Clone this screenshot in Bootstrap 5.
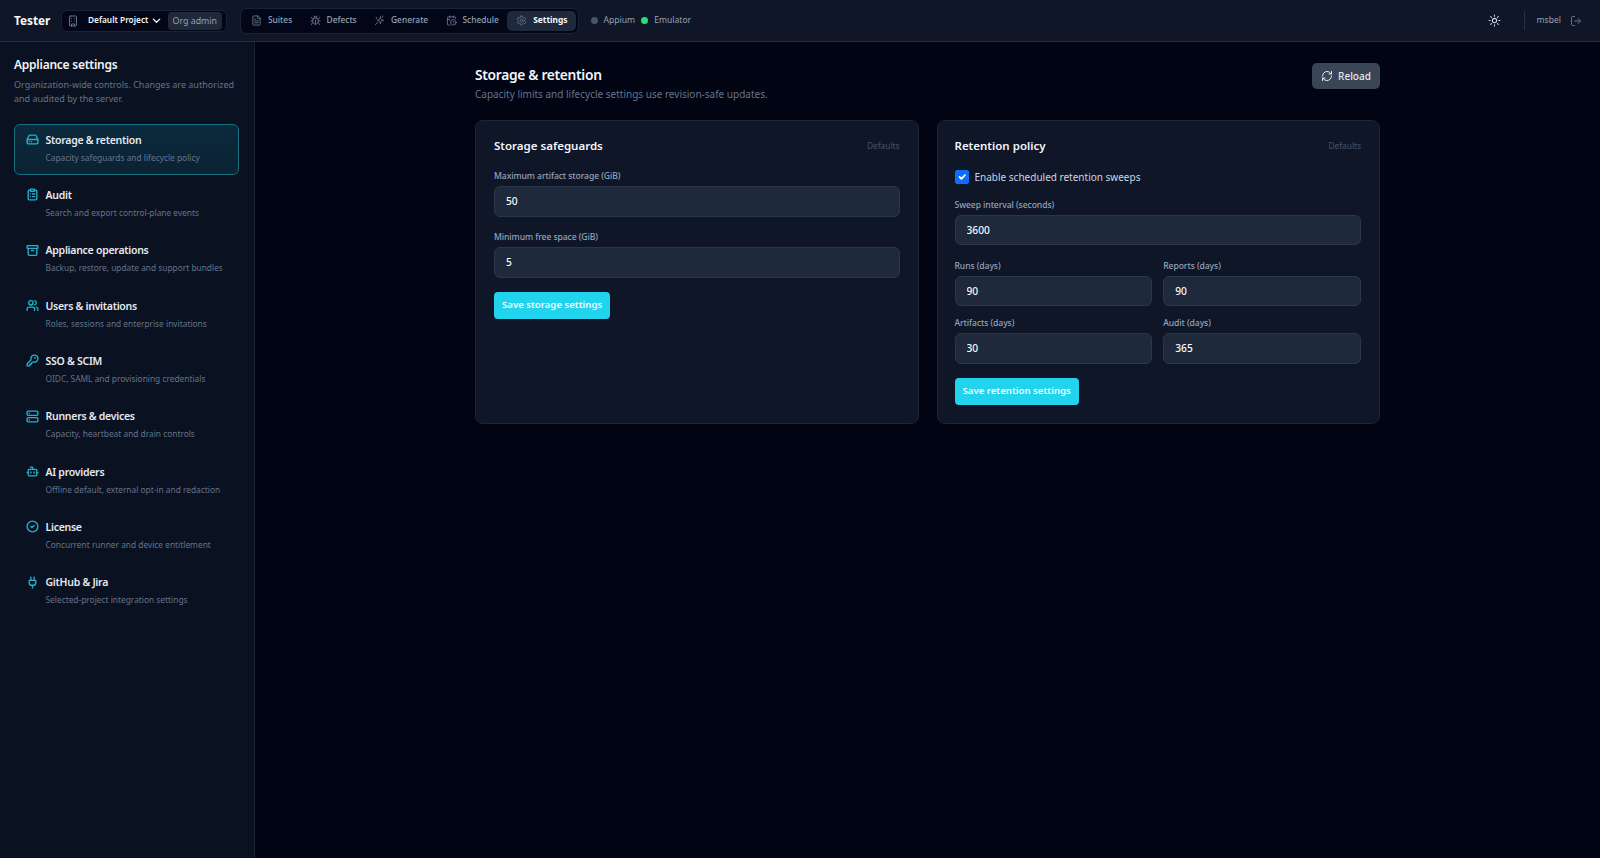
<!DOCTYPE html>
<html lang="en" data-bs-theme="dark">
<head>
<meta charset="utf-8">
<title>Tester</title>
<link href="https://cdn.jsdelivr.net/npm/bootstrap@5.3.0/dist/css/bootstrap.min.css" rel="stylesheet">
<style>
html,body{height:100%}
body{background:#010413;color:#e2e8f0;font-family:"Noto Sans","Liberation Sans",sans-serif;font-size:12px;overflow:hidden}
.ico{fill:none;stroke:currentColor;stroke-width:2;stroke-linecap:round;stroke-linejoin:round;flex:none}
.app{height:858px}
.topbar{height:42px;background:#0e1628;border-bottom:1px solid #232c3c;padding:0 18px 0 14px}
.brand{font-size:11.8px;font-weight:700;color:#f8fafc;width:47px}
.switcher{height:22px;background:#020617;border:1px solid #1a2333;border-radius:6px;padding:0 4px 0 5px;color:#f1f5f9;font-size:8.3px;font-weight:600;width:166px;white-space:nowrap}
.switcher .ico{color:#64748b}
.switcher .pname{margin-left:9px}
.switcher .chev{color:#f1f5f9;margin:0 0 0 3px;stroke-width:3}
.role{height:18px;background:#1e293b;border-radius:4px;color:#94a3b8;font-weight:400;padding:0 5px;line-height:18px;font-size:8.8px;margin-left:auto}
.mainnav{height:26px;background:#020617;border:1px solid #1a2333;border-radius:7px;padding:2px;margin-left:13px;width:338.5px}
.mainnav a{color:#94a3b8;font-size:8.4px;font-weight:500;text-decoration:none;height:20px;padding:0 8px 0 9px;border-radius:5px;gap:6px}
.mainnav a:first-child{padding-left:8px}
.mainnav a .ico{color:#64748b}
.mainnav a.active{background:#1e293b;color:#f8fafc;font-weight:700}
.status{font-size:8.6px;color:#94a3b8;margin-left:12px;gap:6px}
.dot{width:7px;height:7px;border-radius:50%;background:#475569;display:inline-block}
.dot.on{background:#22e07a}
.sep{width:1px;height:19px;background:#263143}
.user{font-size:8.6px;color:#94a3b8}
.side{width:255px;background:#0a1120;border-right:1px solid #1c2433;padding:13px 15px 13px 14px}
.side h2{font-size:12px;font-weight:600;letter-spacing:-.25px;color:#f1f5f9;margin:1px 0 4px;line-height:18px}
.side .lead-s{font-size:9px;line-height:14px;color:#64748b;margin-bottom:17.5px}
.snav{display:block;text-decoration:none;height:51px;margin-bottom:4.35px;padding:7px 12px 7px 11px;border:1px solid transparent;border-radius:6px}
.snav .ico{color:#1fb4cb;stroke-width:2.5}
.snav .t{font-size:10.5px;font-weight:600;letter-spacing:-.27px;color:#e5e9f0;line-height:16px;gap:6.5px}
.snav .d{font-size:8.35px;color:#64748b;line-height:12px;margin-top:4px;padding-left:19.5px;white-space:nowrap}
.snav.active{background:linear-gradient(180deg,#0b2a3d,#0b2233);border-color:#12707f}
.content{width:905px;margin:0 auto;padding-top:21px}
.pagehead h1{font-size:13.8px;font-weight:600;letter-spacing:-.32px;color:#f1f5f9;margin:2px 0 2px;line-height:20px}
.pagehead p{font-size:10px;color:#64748b;margin:0;line-height:14px}
.btn-reload{background:#3a4555;color:#e2e8f0;font-size:10px;height:26px;width:68px;padding:0;border:0;border-radius:5px;gap:5px;font-weight:500}
.btn-reload:hover{background:#3a4555;color:#e2e8f0}
.cards{display:grid;grid-template-columns:1fr 1fr;gap:18px;margin-top:19px}
.pane{background:#0e1628;border:1px solid #1c2536;border-radius:8px;padding:16px 18px 18px;height:304px}
.pane.right{padding-left:17px}
.pane h3{font-size:11.5px;font-weight:600;color:#f1f5f9;margin:0;line-height:18px}
.pane .def{font-size:8.3px;color:#475569}
.pane .head{margin-bottom:15px}
.pane .field{margin-bottom:14.5px}
.pane label.form-label{display:block;font-size:8.6px;letter-spacing:-.08px;color:#94a3b8;font-weight:500;margin:0 0 3px;line-height:13px}
.pane .form-control{height:30.5px;min-height:0;background:#1e293b;border:1px solid #2b3648;border-radius:6px;color:#f8fafc;font-size:10.2px;font-weight:500;padding:0 11px;box-shadow:none}
.btn-save{background:#22d3ee;color:#f0fdff;font-size:9.6px;font-weight:600;height:27px;padding:0 8px;border:0;border-radius:4px}
.btn-save:hover{background:#22d3ee;color:#f0fdff}
.pane .form-check-input{width:14px;height:14px;margin:0;border-radius:2px;background-color:#0d6efd;border-color:#0d6efd}
.checkrow{gap:6px;margin-bottom:14.5px;height:14px}
.check-l{font-size:10px;color:#cbd5e1}
.pair{display:grid;grid-template-columns:1fr 1fr;column-gap:11px;row-gap:11px;margin-bottom:14.5px}
</style>
</head>
<body>
<svg width="0" height="0" class="position-absolute">
<symbol id="i-building" viewBox="0 0 24 24"><rect x="5" y="2" width="14" height="20" rx="2"/><path d="M9 22v-4h6v4M9 7h.01M15 7h.01M9 12h.01M15 12h.01"/></symbol>
<symbol id="i-chev" viewBox="0 0 24 24"><path d="m5 9 7 7 7-7"/></symbol>
<symbol id="i-file" viewBox="0 0 24 24"><path d="M15 2H6a2 2 0 0 0-2 2v16a2 2 0 0 0 2 2h12a2 2 0 0 0 2-2V7Z"/><path d="M14 2v4a2 2 0 0 0 2 2h4M10 9H8M16 13H8M16 17H8"/></symbol>
<symbol id="i-bug" viewBox="0 0 24 24"><path d="m8 2 1.88 1.88M14.12 3.88 16 2M9 7.13v-1a3.003 3.003 0 1 1 6 0v1"/><path d="M12 20c-3.3 0-6-2.7-6-6v-3a4 4 0 0 1 4-4h4a4 4 0 0 1 4 4v3c0 3.3-2.7 6-6 6M12 20v-9M6.53 9C4.6 8.8 3 7.1 3 5M6 13H2M3 21c0-2.1 1.7-3.9 3.8-4M20.97 5c0 2.1-1.6 3.8-3.5 4M22 13h-4M17.2 17c2.1.1 3.8 1.9 3.8 4"/></symbol>
<symbol id="i-spark" viewBox="0 0 24 24"><path d="m14 4-1.3 4.7a2 2 0 0 1-1.3 1.3L7 11.5l4.4 1.5a2 2 0 0 1 1.3 1.3L14 19l1.3-4.7a2 2 0 0 1 1.3-1.3l4.4-1.5-4.4-1.5a2 2 0 0 1-1.3-1.3Z"/><path d="m3 21 5-5M19 2v3M5 5v3"/></symbol>
<symbol id="i-cal" viewBox="0 0 24 24"><path d="M21 7.5V6a2 2 0 0 0-2-2H5a2 2 0 0 0-2 2v14a2 2 0 0 0 2 2h3.5M16 2v4M8 2v4M3 10h5M17.5 17.5 16 16.3V14"/><circle cx="16" cy="16" r="6"/></symbol>
<symbol id="i-gear" viewBox="0 0 24 24"><path d="M12.22 2h-.44a2 2 0 0 0-2 2v.18a2 2 0 0 1-1 1.73l-.43.25a2 2 0 0 1-2 0l-.15-.08a2 2 0 0 0-2.73.73l-.22.38a2 2 0 0 0 .73 2.73l.15.1a2 2 0 0 1 1 1.72v.51a2 2 0 0 1-1 1.74l-.15.09a2 2 0 0 0-.73 2.73l.22.38a2 2 0 0 0 2.73.73l.15-.08a2 2 0 0 1 2 0l.43.25a2 2 0 0 1 1 1.73V20a2 2 0 0 0 2 2h.44a2 2 0 0 0 2-2v-.18a2 2 0 0 1 1-1.73l.43-.25a2 2 0 0 1 2 0l.15.08a2 2 0 0 0 2.73-.73l.22-.39a2 2 0 0 0-.73-2.73l-.15-.08a2 2 0 0 1-1-1.74v-.5a2 2 0 0 1 1-1.74l.15-.09a2 2 0 0 0 .73-2.73l-.22-.38a2 2 0 0 0-2.73-.73l-.15.08a2 2 0 0 1-2 0l-.43-.25a2 2 0 0 1-1-1.73V4a2 2 0 0 0-2-2z"/><circle cx="12" cy="12" r="3"/></symbol>
<symbol id="i-sun" viewBox="0 0 24 24"><circle cx="12" cy="12" r="4"/><path d="M12 2v2M12 20v2M4.93 4.93l1.41 1.41M17.66 17.66l1.41 1.41M2 12h2M20 12h2M6.34 17.66l-1.41 1.41M19.07 4.93l-1.41 1.41"/></symbol>
<symbol id="i-out" viewBox="0 0 24 24"><path d="M9 21H5a2 2 0 0 1-2-2V5a2 2 0 0 1 2-2h4M16 17l5-5-5-5M21 12H9"/></symbol>
<symbol id="i-refresh" viewBox="0 0 24 24"><path d="M3 12a9 9 0 0 1 9-9 9.75 9.75 0 0 1 6.74 2.74L21 8M21 3v5h-5M21 12a9 9 0 0 1-9 9 9.75 9.75 0 0 1-6.74-2.74L3 16M8 16H3v5"/></symbol>
<symbol id="i-drive" viewBox="0 0 24 24"><path d="M22 12H2M5.45 5.11 2 12v6a2 2 0 0 0 2 2h16a2 2 0 0 0 2-2v-6l-3.45-6.89A2 2 0 0 0 16.76 4H7.24a2 2 0 0 0-1.79 1.11zM6 16h.01M10 16h.01"/></symbol>
<symbol id="i-clip" viewBox="0 0 24 24"><rect x="8" y="2" width="8" height="4" rx="1"/><path d="M16 4h2a2 2 0 0 1 2 2v14a2 2 0 0 1-2 2H6a2 2 0 0 1-2-2V6a2 2 0 0 1 2-2h2M12 11h4M12 16h4M8 11h.01M8 16h.01"/></symbol>
<symbol id="i-archive" viewBox="0 0 24 24"><rect x="2" y="3" width="20" height="5" rx="1"/><path d="M4 8v11a2 2 0 0 0 2 2h12a2 2 0 0 0 2-2V8M10 12h4"/></symbol>
<symbol id="i-users" viewBox="0 0 24 24"><path d="M16 21v-2a4 4 0 0 0-4-4H6a4 4 0 0 0-4 4v2"/><circle cx="9" cy="7" r="4"/><path d="M22 21v-2a4 4 0 0 0-3-3.87M16 3.13a4 4 0 0 1 0 7.75"/></symbol>
<symbol id="i-key" viewBox="0 0 24 24"><path d="M2.586 17.414A2 2 0 0 0 2 18.828V21a1 1 0 0 0 1 1h3a1 1 0 0 0 1-1v-1a1 1 0 0 1 1-1h1a1 1 0 0 0 1-1v-1a1 1 0 0 1 1-1h.172a2 2 0 0 0 1.414-.586l.814-.814a6.5 6.5 0 1 0-4-4z"/><circle cx="16.5" cy="7.5" r=".5"/></symbol>
<symbol id="i-server" viewBox="0 0 24 24"><rect x="2" y="2" width="20" height="8" rx="2"/><rect x="2" y="14" width="20" height="8" rx="2"/><path d="M6 6h.01M6 18h.01"/></symbol>
<symbol id="i-bot" viewBox="0 0 24 24"><path d="M12 8V4H8"/><rect x="4" y="8" width="16" height="12" rx="2"/><path d="M2 14h2M20 14h2M15 13v2M9 13v2"/></symbol>
<symbol id="i-check" viewBox="0 0 24 24"><circle cx="12" cy="12" r="10"/><path d="m9 12 2 2 4-4"/></symbol>
<symbol id="i-plug" viewBox="0 0 24 24"><path d="M12 22v-5M9 8V2M15 8V2M18 8v5a4 4 0 0 1-4 4h-4a4 4 0 0 1-4-4V8Z"/></symbol>
</svg>

<div class="app d-flex flex-column">
  <header class="topbar d-flex align-items-center">
    <div class="brand">Tester</div>
    <div class="switcher d-flex align-items-center">
      <svg class="ico" width="12" height="12"><use href="#i-building"/></svg>
      <span class="pname">Default Project</span>
      <svg class="ico chev" width="11" height="11"><use href="#i-chev"/></svg>
      <span class="role">Org admin</span>
    </div>
    <nav class="mainnav d-flex align-items-center justify-content-between">
      <a class="d-flex align-items-center" href="#"><svg class="ico" width="11" height="11"><use href="#i-file"/></svg>Suites</a>
      <a class="d-flex align-items-center" href="#"><svg class="ico" width="11" height="11"><use href="#i-bug"/></svg>Defects</a>
      <a class="d-flex align-items-center" href="#"><svg class="ico" width="11" height="11"><use href="#i-spark"/></svg>Generate</a>
      <a class="d-flex align-items-center" href="#"><svg class="ico" width="11" height="11"><use href="#i-cal"/></svg>Schedule</a>
      <a class="d-flex align-items-center active" href="#"><svg class="ico" width="11" height="11"><use href="#i-gear"/></svg>Settings</a>
    </nav>
    <div class="status d-flex align-items-center">
      <span class="dot"></span><span>Appium</span><span class="dot on"></span><span>Emulator</span>
    </div>
    <div class="ms-auto d-flex align-items-center">
      <svg class="ico" width="13" height="13" style="color:#cbd5e1"><use href="#i-sun"/></svg>
      <span class="sep" style="margin-left:23px;margin-right:11px"></span>
      <span class="user">msbel</span>
      <svg class="ico" width="12" height="12" style="color:#64748b;margin-left:9px"><use href="#i-out"/></svg>
    </div>
  </header>
  <div class="d-flex flex-grow-1 overflow-hidden">
    <aside class="side flex-shrink-0">
      <h2>Appliance settings</h2>
      <p class="lead-s">Organization-wide controls. Changes are authorized and audited by the server.</p>
      <a class="snav active" href="#"><div class="t d-flex align-items-center"><svg class="ico" width="13" height="13"><use href="#i-drive"/></svg><span>Storage &amp; retention</span></div><div class="d">Capacity safeguards and lifecycle policy</div></a>
      <a class="snav" href="#"><div class="t d-flex align-items-center"><svg class="ico" width="13" height="13"><use href="#i-clip"/></svg><span>Audit</span></div><div class="d">Search and export control-plane events</div></a>
      <a class="snav" href="#"><div class="t d-flex align-items-center"><svg class="ico" width="13" height="13"><use href="#i-archive"/></svg><span>Appliance operations</span></div><div class="d">Backup, restore, update and support bundles</div></a>
      <a class="snav" href="#"><div class="t d-flex align-items-center"><svg class="ico" width="13" height="13"><use href="#i-users"/></svg><span>Users &amp; invitations</span></div><div class="d">Roles, sessions and enterprise invitations</div></a>
      <a class="snav" href="#"><div class="t d-flex align-items-center"><svg class="ico" width="13" height="13"><use href="#i-key"/></svg><span>SSO &amp; SCIM</span></div><div class="d">OIDC, SAML and provisioning credentials</div></a>
      <a class="snav" href="#"><div class="t d-flex align-items-center"><svg class="ico" width="13" height="13"><use href="#i-server"/></svg><span>Runners &amp; devices</span></div><div class="d">Capacity, heartbeat and drain controls</div></a>
      <a class="snav" href="#"><div class="t d-flex align-items-center"><svg class="ico" width="13" height="13"><use href="#i-bot"/></svg><span>AI providers</span></div><div class="d">Offline default, external opt-in and redaction</div></a>
      <a class="snav" href="#"><div class="t d-flex align-items-center"><svg class="ico" width="13" height="13"><use href="#i-check"/></svg><span>License</span></div><div class="d">Concurrent runner and device entitlement</div></a>
      <a class="snav" href="#"><div class="t d-flex align-items-center"><svg class="ico" width="13" height="13"><use href="#i-plug"/></svg><span>GitHub &amp; Jira</span></div><div class="d">Selected-project integration settings</div></a>
    </aside>
    <main class="flex-grow-1">
      <div class="content">
        <div class="pagehead d-flex justify-content-between align-items-start">
          <div>
            <h1>Storage &amp; retention</h1>
            <p>Capacity limits and lifecycle settings use revision-safe updates.</p>
          </div>
          <button class="btn btn-reload d-flex align-items-center justify-content-center" type="button"><svg class="ico" width="12" height="12"><use href="#i-refresh"/></svg>Reload</button>
        </div>
        <div class="cards">
          <section class="pane">
            <div class="head d-flex justify-content-between align-items-center"><h3>Storage safeguards</h3><span class="def">Defaults</span></div>
            <div class="field"><label class="form-label">Maximum artifact storage (GiB)</label><input class="form-control" value="50"></div>
            <div class="field"><label class="form-label">Minimum free space (GiB)</label><input class="form-control" value="5"></div>
            <button class="btn btn-save" type="button">Save storage settings</button>
          </section>
          <section class="pane right">
            <div class="head d-flex justify-content-between align-items-center"><h3>Retention policy</h3><span class="def">Defaults</span></div>
            <div class="checkrow d-flex align-items-center"><input class="form-check-input" type="checkbox" checked><span class="check-l">Enable scheduled retention sweeps</span></div>
            <div class="field"><label class="form-label">Sweep interval (seconds)</label><input class="form-control" value="3600"></div>
            <div class="pair">
              <div><label class="form-label">Runs (days)</label><input class="form-control" value="90"></div>
              <div><label class="form-label">Reports (days)</label><input class="form-control" value="90"></div>
              <div><label class="form-label">Artifacts (days)</label><input class="form-control" value="30"></div>
              <div><label class="form-label">Audit (days)</label><input class="form-control" value="365"></div>
            </div>
            <button class="btn btn-save" type="button">Save retention settings</button>
          </section>
        </div>
      </div>
    </main>
  </div>
</div>
</body>
</html>
